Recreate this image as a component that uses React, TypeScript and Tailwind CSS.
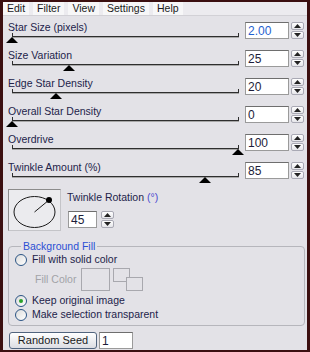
import React from 'react'

type Slider = { label: string; value: string; pos: number; focus?: boolean }

const sliders: Slider[] = [
  { label: "Star Size (pixels)", value: "2.00", pos: 0, focus: true },
  { label: "Size Variation", value: "25", pos: 57 },
  { label: "Edge Star Density", value: "20", pos: 44 },
  { label: "Overall Star Density", value: "0", pos: 0 },
  { label: "Overdrive", value: "100", pos: 226 },
  { label: "Twinkle Amount (%)", value: "85", pos: 193 },
]

const Arrow = ({ up }: { up?: boolean }) => (
  <svg width="7" height="4" viewBox="0 0 7 4">
    <polygon points={up ? "3.5,0 7,4 0,4" : "0,0 7,0 3.5,4"} fill="#222" />
  </svg>
)

const Spin = () => (
  <div className="flex flex-col gap-px w-[13px] h-[17px]">
    {[true, false].map((up) => (
      <div key={String(up)} className="flex-1 flex items-center justify-center rounded-[2px] border border-[#a9a9b4] bg-gradient-to-b from-white to-[#e6e6ea]">
        <Arrow up={up} />
      </div>
    ))}
  </div>
)

const EditBox = ({ value, w, h, focus }: { value: string; w: string; h: string; focus?: boolean }) => (
  <div className={`${w} ${h} bg-white border border-[#9a9a9a] border-t-[#6e6e6e] pl-[2px] flex items-center text-[12px] ${focus ? "text-[#1f5fd0]" : "text-[#1d1d3a]"}`}>
    {value}
  </div>
)

const Track = ({ pos }: { pos: number }) => (
  <div className="relative ml-[4px] w-[227px] h-[10px]">
    <div className="absolute left-0 top-[3px] w-full h-[2px] border-t border-[#2e2e2e] border-b border-b-[#a8a8a8]" />
    <div className="absolute left-0 top-0 w-px h-[4px] bg-[#2e2e2e]" />
    <div className="absolute right-0 top-0 w-px h-[4px] bg-[#2e2e2e]" />
    <svg className="absolute top-[4px]" style={{ left: pos - 6 }} width="12" height="6" viewBox="0 0 12 6">
      <polygon points="6,0 12,6 0,6" fill="#000" />
    </svg>
  </div>
)

const Radio = ({ checked }: { checked?: boolean }) => (
  <div className="w-[12px] h-[12px] rounded-full border border-[#2c5585] bg-gradient-to-br from-[#dcdcdc] to-white flex items-center justify-center">
    {checked && <div className="w-[4px] h-[4px] rounded-full bg-[#2aa12a]" />}
  </div>
)

export default function App() {
  return (
    <div className="w-[310px] h-[352px] overflow-hidden bg-[#e3e2e7] border-x-[3px] border-t-[2px] border-b-[2px] border-[#3b0f10] font-['Liberation_Sans',Arial,sans-serif] text-[10.5px] text-[#22224a] flex flex-col">
      <div className="h-[14px] bg-[#ecebef] flex items-center gap-[4px] pl-0 border-b border-[#d2d1d6] text-[#1a1a1a]">
        {["Edit", "Filter", "View", "Settings", "Help"].map((m) => (
          <span key={m} className="bg-[#f7f7f8] px-[4px] h-[13px] leading-[13px]">{m}</span>
        ))}
      </div>

      <div className="pt-[3px]">
        {sliders.map((s) => (
          <div key={s.label} className="flex h-[28px]">
            <div className="w-[242px] pl-[5px] pt-[3px]">
              <div className="h-[11px] leading-[11px]">{s.label}</div>
              <Track pos={s.pos} />
            </div>
            <div className="pt-[3px] flex gap-[2px]">
              <EditBox value={s.value} w="w-[44px]" h="h-[17px]" focus={s.focus} />
              <Spin />
            </div>
          </div>
        ))}
      </div>

      <div className="flex mt-[2px] pl-[5px] gap-[6px]">
        <div className="w-[53px] h-[42px] bg-[#ebebee] border border-[#8c8c8c] border-r-[#c4c4c8] border-b-[#c4c4c8]">
          <svg width="51" height="40" viewBox="0 0 51 40">
            <ellipse cx="25.5" cy="22" rx="20.5" ry="15.5" fill="none" stroke="#1a1a1a" strokeWidth="1" />
            <line x1="25.5" y1="22" x2="40" y2="10" stroke="#1a1a1a" strokeWidth="1" />
            <circle cx="40" cy="10" r="3" fill="#000" />
          </svg>
        </div>
        <div className="flex flex-col pt-[2px]">
          <div className="h-[13px] leading-[13px]">Twinkle Rotation <span className="text-[#4a4ad0]">(°)</span></div>
          <div className="flex gap-[4px] mt-[7px] ml-px">
            <EditBox value="45" w="w-[29px]" h="h-[17px]" />
            <Spin />
          </div>
        </div>
      </div>

      <fieldset className="mt-[9px] ml-[5px] w-[297px] border border-[#b6b6bc] rounded-[4px] pl-[6px] pb-[4px]">
        <legend className="ml-[6px] px-[2px] h-[12px] leading-[12px] text-[#2b4fd4]">Background Fill</legend>
        <div className="flex items-center gap-[5px] h-[12px] mt-[2px]">
          <Radio />
          <span>Fill with solid color</span>
        </div>
        <div className="flex items-center h-[23px] mt-[2px] pl-[20px]">
          <span className="text-[#a2a2a8] w-[46px]">Fill Color</span>
          <div className="w-[29px] h-[23px] border border-[#a8a8ae]" />
          <div className="relative w-[30px] h-[23px] ml-[3px]">
            <div className="absolute left-0 top-0 w-[17px] h-[14px] border border-[#a8a8ae] bg-[#e3e2e7]" />
            <div className="absolute left-[13px] top-[9px] w-[17px] h-[14px] border border-[#a8a8ae] bg-[#e3e2e7]" />
          </div>
        </div>
        <div className="flex items-center gap-[5px] h-[12px] mt-[4px]">
          <Radio checked />
          <span>Keep original image</span>
        </div>
        <div className="flex items-center gap-[5px] h-[12px] mt-[2px]">
          <Radio />
          <span>Make selection transparent</span>
        </div>
      </fieldset>

      <div className="flex mt-[6px] pl-[6px] gap-[2px]">
        <div className="w-[88px] h-[17px] rounded-[3px] border border-[#51647e] bg-gradient-to-b from-white to-[#dcdde3] flex items-center justify-center text-[11px] text-[#1a1a1a]">
          Random Seed
        </div>
        <EditBox value="1" w="w-[34px]" h="h-[17px]" />
      </div>
    </div>
  )
}
